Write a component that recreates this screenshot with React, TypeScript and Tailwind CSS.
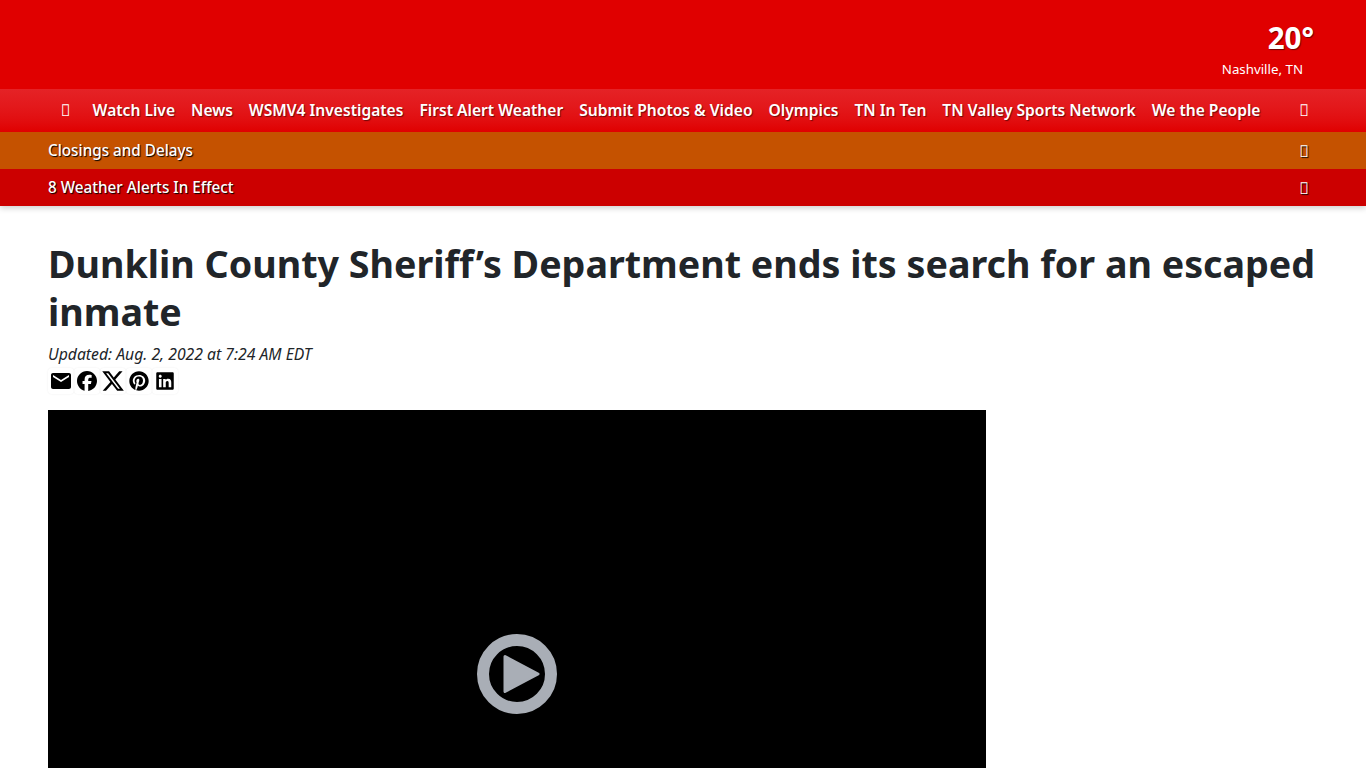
import React from "react";
import { MdEmail } from "react-icons/md";
import { FaFacebook, FaLinkedin, FaPinterest, FaXTwitter } from "react-icons/fa6";

const navItems = [
  "Watch Live",
  "News",
  "WSMV4 Investigates",
  "First Alert Weather",
  "Submit Photos & Video",
  "Olympics",
  "TN In Ten",
  "TN Valley Sports Network",
  "We the People",
];

const shareIcons = [
  { Icon: MdEmail, size: 24 },
  { Icon: FaFacebook, size: 20 },
  { Icon: FaXTwitter, size: 24 },
  { Icon: FaPinterest, size: 20 },
  { Icon: FaLinkedin, size: 20 },
];

const MISSING_GLYPH = "\uE900";

function AlertBar({ label, color }: { label: string; color: string }) {
  return (
    <div className={`flex h-[37px] items-center justify-between pl-[48px] pr-[57px] ${color}`}>
      <a className="text-[15.25px] font-medium text-white [text-shadow:1px_1px_1px_#000]">{label}</a>
      <span className="text-[16px] leading-[16px] text-white [text-shadow:1px_1px_1px_#000]">{MISSING_GLYPH}</span>
    </div>
  );
}

export default function App() {
  return (
    <div className="h-screen overflow-hidden bg-white font-['Noto_Sans',sans-serif] text-[#212529]">
      <header className="shadow-[0_2px_6px_rgba(0,0,0,0.2)]">
        <div className="flex h-[89px] flex-col items-end bg-[#e00000] pr-[52px] pt-[17px] text-white">
          <div className="text-[29.5px] font-bold leading-[42px] [text-shadow:1px_1px_1px_rgba(0,0,0,0.5)]">20°</div>
          <div className="mr-[11px] text-[13.3px] leading-[20px]">Nashville, TN</div>
        </div>

        <nav className="flex h-[43px] items-center bg-gradient-to-b from-[#e52226] to-[#e00000] pl-[61px] text-white">
          <span className="-mt-[2px] mr-[22px] text-[16px] leading-[16px]">{MISSING_GLYPH}</span>
          <div className="flex gap-[16px]">
            {navItems.map((item) => (
              <a key={item} className="whitespace-nowrap text-[15.6px] font-semibold [text-shadow:1px_1px_1px_rgba(0,0,0,0.5)]">
                {item}
              </a>
            ))}
          </div>
          <span className="-mt-[2px] ml-[39px] text-[16px] leading-[16px]">{MISSING_GLYPH}</span>
        </nav>

        <AlertBar label="Closings and Delays" color="bg-[#c55200]" />
        <AlertBar label="8 Weather Alerts In Effect" color="bg-[#cc0000]" />
      </header>

      <main className="px-[48px] pt-[34px]">
        <h1 className="text-[37.65px] font-bold leading-[48px]">
          Dunklin County Sheriff’s Department ends its search for an escaped inmate
        </h1>
        <p className="mt-[6px] text-[15.75px] italic leading-[24px]">Updated: Aug. 2, 2022 at 7:24 AM EDT</p>
        <div className="mt-[2px] flex">
          {shareIcons.map(({ Icon, size }, i) => (
            <span key={i} className="flex h-[26px] w-[26px] items-center justify-center rounded-[4px] shadow-[0_0_2px_rgba(0,0,0,0.08)]">
              <Icon size={size} color="#000" />
            </span>
          ))}
        </div>
        <div className="mt-[16px] flex aspect-video w-[938px] items-center justify-center bg-black">
          <svg width="80" height="80" viewBox="0 0 80 80">
            <circle cx="40" cy="40" r="34" fill="none" stroke="#a9aeb6" strokeWidth="12" />
            <path d="M28 22.5 L61 40 L28 57.5 Z" fill="#a9aeb6" stroke="#a9aeb6" strokeWidth="3" strokeLinejoin="round" />
          </svg>
        </div>
      </main>
    </div>
  );
}
